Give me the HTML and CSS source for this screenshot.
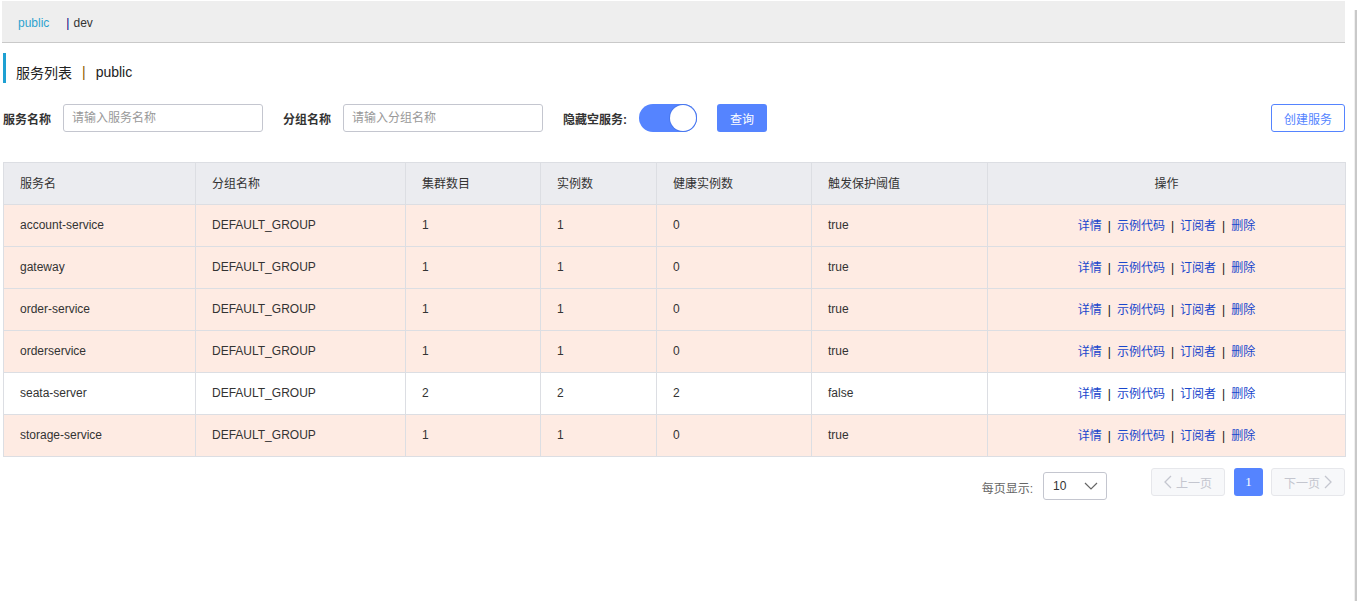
FILE: index.html
```html
<!DOCTYPE html>
<html lang="zh">
<head>
<meta charset="utf-8">
<title>服务列表</title>
<link rel="stylesheet" href="styles.css">
</head>
<body>
<div class="page">
  <main class="main">
    <div class="ns-bar">
      <span class="ns ns-active">public</span>
      <span class="ns-sep">|</span>
      <span class="ns">dev</span>
    </div>

    <div class="page-title">
      <span class="title-text">服务列表</span>
      <span class="title-sep">|</span>
      <span class="title-text">public</span>
    </div>

    <div class="filters">
      <label class="f-label">服务名称</label>
      <input class="f-input" type="text" placeholder="请输入服务名称">
      <label class="f-label gap-l">分组名称</label>
      <input class="f-input" type="text" placeholder="请输入分组名称">
      <label class="f-label gap-l">隐藏空服务:</label>
      <span class="switch"><span class="knob"></span></span>
      <button class="btn-primary">查询</button>
      <button class="btn-outline">创建服务</button>
    </div>

    <table class="grid">
      <colgroup>
        <col style="width:192px"><col style="width:210px"><col style="width:135px"><col style="width:116px"><col style="width:155px"><col style="width:176px"><col style="width:358px">
      </colgroup>
      <thead>
        <tr><th>服务名</th><th>分组名称</th><th>集群数目</th><th>实例数</th><th>健康实例数</th><th>触发保护阈值</th><th class="center">操作</th></tr>
      </thead>
      <tbody>
        <tr class="warn"><td>account-service</td><td>DEFAULT_GROUP</td><td>1</td><td>1</td><td>0</td><td>true</td><td class="center ops"><a>详情</a><i>|</i><a>示例代码</a><i>|</i><a>订阅者</a><i>|</i><a>删除</a></td></tr>
        <tr class="warn"><td>gateway</td><td>DEFAULT_GROUP</td><td>1</td><td>1</td><td>0</td><td>true</td><td class="center ops"><a>详情</a><i>|</i><a>示例代码</a><i>|</i><a>订阅者</a><i>|</i><a>删除</a></td></tr>
        <tr class="warn"><td>order-service</td><td>DEFAULT_GROUP</td><td>1</td><td>1</td><td>0</td><td>true</td><td class="center ops"><a>详情</a><i>|</i><a>示例代码</a><i>|</i><a>订阅者</a><i>|</i><a>删除</a></td></tr>
        <tr class="warn"><td>orderservice</td><td>DEFAULT_GROUP</td><td>1</td><td>1</td><td>0</td><td>true</td><td class="center ops"><a>详情</a><i>|</i><a>示例代码</a><i>|</i><a>订阅者</a><i>|</i><a>删除</a></td></tr>
        <tr><td>seata-server</td><td>DEFAULT_GROUP</td><td>2</td><td>2</td><td>2</td><td>false</td><td class="center ops"><a>详情</a><i>|</i><a>示例代码</a><i>|</i><a>订阅者</a><i>|</i><a>删除</a></td></tr>
        <tr class="warn"><td>storage-service</td><td>DEFAULT_GROUP</td><td>1</td><td>1</td><td>0</td><td>true</td><td class="center ops"><a>详情</a><i>|</i><a>示例代码</a><i>|</i><a>订阅者</a><i>|</i><a>删除</a></td></tr>
      </tbody>
    </table>

    <div class="pager">
      <span class="pg-label">每页显示:</span>
      <span class="pg-select"><span>10</span>
        <svg width="14" height="8" viewBox="0 0 14 8"><path d="M1 1 L7 7 L13 1" fill="none" stroke="#666" stroke-width="1.2"/></svg>
      </span>
      <span class="pg-btn disabled pg-prev">
        <svg width="8" height="14" viewBox="0 0 8 14"><path d="M7 1 L1 7 L7 13" fill="none" stroke="#c4c6cf" stroke-width="1.3"/></svg>
        上一页
      </span>
      <span class="pg-btn current">1</span>
      <span class="pg-btn disabled pg-next">下一页
        <svg width="8" height="14" viewBox="0 0 8 14"><path d="M1 1 L7 7 L1 13" fill="none" stroke="#c4c6cf" stroke-width="1.3"/></svg>
      </span>
    </div>
  </main>
  <div class="edge"></div>
</div>
</body>
</html>
```

FILE: styles.css
```css
* { box-sizing: border-box; }
html, body { margin: 0; padding: 0; background: #fff; }
body {
  font-family: "Liberation Sans", "Noto Sans CJK SC", sans-serif;
  font-size: 12px;
  color: #333;
}
.page {
  display: flex;
  height: 601px;
}
.main {
  width: 1343px;
  margin-left: 2px;
  padding-top: 1px;
}
.edge {
  margin-left: auto;
  margin-right: 1px;
  margin-top: 10px;
  width: 3px;
  border-left: 1px solid #f0f0f0;
  background: #c9c9c9;
}
.ns-bar {
  height: 42px;
  background: #eeeeee;
  border-bottom: 1px solid #c9c9c9;
  display: flex;
  align-items: center;
  padding-left: 16px;
  padding-top: 3px;
  font-size: 12px;
}
.ns { color: #333; }
.ns-active { color: #2ea3cf; }
.ns-sep { color: #000080; margin-left: 17px; margin-right: 4px; }

.page-title {
  margin-top: 10px;
  margin-left: 1px;
  height: 30px;
  border-left: 3px solid #1ea0d2;
  display: flex;
  align-items: center;
  padding-left: 10px;
  padding-top: 8px;
  font-size: 14px;
  color: #222;
}
.title-sep { margin: 0 10px; color: #8a5a00; }

.filters {
  margin-top: 21px;
  margin-left: 1px;
  display: flex;
  align-items: center;
  height: 28px;
}
.f-label {
  font-weight: bold;
  font-size: 12px;
  color: #333;
  margin-right: 12px;
}
.gap-l { margin-left: 20px; }
.f-input {
  width: 200px;
  height: 28px;
  border: 1px solid #c4c6cf;
  border-radius: 3px;
  padding: 0 8px;
  font-family: inherit;
  font-size: 12px;
  color: #333;
  outline: none;
}
.f-input::placeholder { color: #999; }
.switch {
  width: 58px;
  height: 28px;
  border-radius: 14px;
  background: #5584ff;
  display: flex;
  justify-content: flex-end;
  align-items: center;
  padding-right: 1px;
  margin-right: 20px;
}
.knob {
  width: 26px;
  height: 26px;
  border-radius: 50%;
  background: #fff;
  box-shadow: 0 0 0 1px #4a78ee;
}
.btn-primary {
  width: 50px;
  height: 28px;
  border: none;
  border-radius: 3px;
  background: #5584ff;
  color: #fff;
  font-family: inherit;
  font-size: 12px;
  padding: 0;
}
.btn-outline {
  margin-left: auto;
  width: 74px;
  height: 28px;
  border: 1px solid #5584ff;
  border-radius: 3px;
  background: #fff;
  color: #5584ff;
  font-family: inherit;
  font-size: 12px;
  padding: 0;
}

.grid {
  margin-top: 30px;
  margin-left: 1px;
  width: 1342px;
  border-collapse: collapse;
  table-layout: fixed;
}
.grid th, .grid td {
  border: 1px solid #dcdee3;
  height: 42px;
  padding: 0 16px 2px;
  text-align: left;
  font-weight: normal;
  font-size: 12px;
  color: #333;
  white-space: nowrap;
}
.grid thead th { background: #ebecf0; height: 42px; }
.grid tbody tr { background: #fff; }
.grid tbody tr.warn { background: #feebe3; }
.grid .center { text-align: center; }
.ops a { color: #1846cc; }
.ops i { font-style: normal; color: #111; margin: 0 6px; }

.pager {
  margin-top: 11px;
  display: flex;
  align-items: flex-start;
  justify-content: flex-end;
}
.pg-label {
  color: #666;
  margin-top: 11px;
  margin-right: 10px;
}
.pg-select {
  margin-top: 4px;
  width: 64px;
  height: 28px;
  border: 1px solid #c4c6cf;
  border-radius: 3px;
  display: flex;
  align-items: center;
  justify-content: space-between;
  padding: 0 8px 0 9px;
  color: #333;
  margin-right: 44px;
}
.pg-btn {
  height: 28px;
  border-radius: 3px;
  display: flex;
  align-items: center;
  justify-content: center;
  gap: 4px;
}
.pg-btn.disabled {
  width: 74px;
  background: #f7f8fa;
  border: 1px solid #e6e7eb;
  color: #c4c6cf;
}
.pg-btn.current {
  width: 29px;
  margin: 0 8px 0 9px;
  background: #5584ff;
  color: #fff;
  font-family: "Liberation Serif", serif;
  font-size: 13px;
}
```
